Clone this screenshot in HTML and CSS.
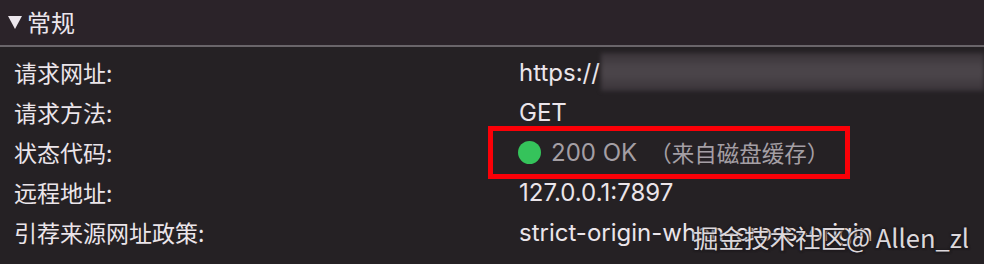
FILE: index.html
```html
<!DOCTYPE html>
<html lang="zh-CN">
<head>
<meta charset="utf-8">
<link rel="stylesheet" href="styles.css">
</head>
<body>
<div class="panel">
  <div class="header">
    <span class="caret"></span>
    <span class="title">常规</span>
  </div>
  <div class="rows">
    <div class="label">请求网址:</div>
    <div class="value"><span>https://</span><span class="redact"></span></div>
    <div class="label">请求方法:</div>
    <div class="value">GET</div>
    <div class="label">状态代码:</div>
    <div class="value status">
      <div class="highlight">
        <span class="dot"></span>
        <span class="code">200 OK</span>
        <span class="cache">（来自磁盘缓存）</span>
      </div>
    </div>
    <div class="label">远程地址:</div>
    <div class="value">127.0.0.1:7897</div>
    <div class="label">引荐来源网址政策:</div>
    <div class="value">strict-origin-when-cross-origin</div>
  </div>
  <div class="watermark">掘金技术社区@ Allen_zl</div>
</div>
</body>
</html>
```
FILE: styles.css
```css
html, body {
  margin: 0;
  padding: 0;
  background: #252124;
}
body {
  width: 984px;
  height: 264px;
  overflow: hidden;
  font-family: "Inter", "Noto Sans CJK SC", sans-serif;
  color: #ebe5ea;
}
.panel {
  position: relative;
  height: 264px;
}
.header {
  background: #2b2329;
  border-bottom: 2px solid #6a656a;
  display: flex;
  align-items: center;
  padding-left: 8px;
  padding-bottom: 2px;
  box-sizing: border-box;
  height: 47px;
}
.caret {
  width: 0;
  height: 0;
  border-left: 7px solid transparent;
  border-right: 7px solid transparent;
  border-top: 13px solid #ece6ec;
  margin-right: 5px;
  margin-top: 2px;
}
.title {
  font-family: "Noto Sans CJK SC", sans-serif;
  font-size: 24px;
  line-height: 1;
  color: #ece6ec;
}
.rows {
  display: grid;
  grid-template-columns: 505px 1fr;
  grid-auto-rows: 40px;
  padding-top: 5px;
}
.label {
  padding-left: 14px;
  font-family: "Noto Sans CJK SC", sans-serif;
  font-size: 23px;
  display: flex;
  align-items: center;
  color: #ebe5ea;
}
.value {
  display: flex;
  align-items: center;
  font-size: 24px;
  white-space: nowrap;
  padding-left: 14px;
  color: #ebe5ea;
}
.redact {
  flex: 1;
  height: 38px;
  margin-left: 1px;
  background: linear-gradient(180deg, #3a3439 0%, #4b454a 40%, #4a4449 60%, #3a3439 100%);
  filter: blur(2px);
}
.status {
  padding-left: 0;
  margin-left: -17px;
}
.highlight {
  display: flex;
  align-items: center;
  border: 5px solid #fb0007;
  width: 362px;
  height: 53px;
  box-sizing: border-box;
  padding-left: 25px;
}
.dot {
  width: 23px;
  height: 23px;
  border-radius: 50%;
  background: #35c35b;
  margin-right: 10px;
}
.code {
  color: #a49fa4;
}
.cache {
  color: #a49fa4;
  font-family: "Noto Sans CJK SC", sans-serif;
  font-size: 22.5px;
  margin-left: 12px;
}
.watermark {
  position: absolute;
  left: 693px;
  top: 218px;
  font-family: "Noto Sans CJK SC", sans-serif;
  font-size: 25.5px;
  color: rgba(240, 236, 240, 0.92);
  text-shadow: 0 0 2px #1e1a1e, 0 0 3px #1e1a1e, 1px 1px 2px #1e1a1e;
  white-space: nowrap;
}
```
